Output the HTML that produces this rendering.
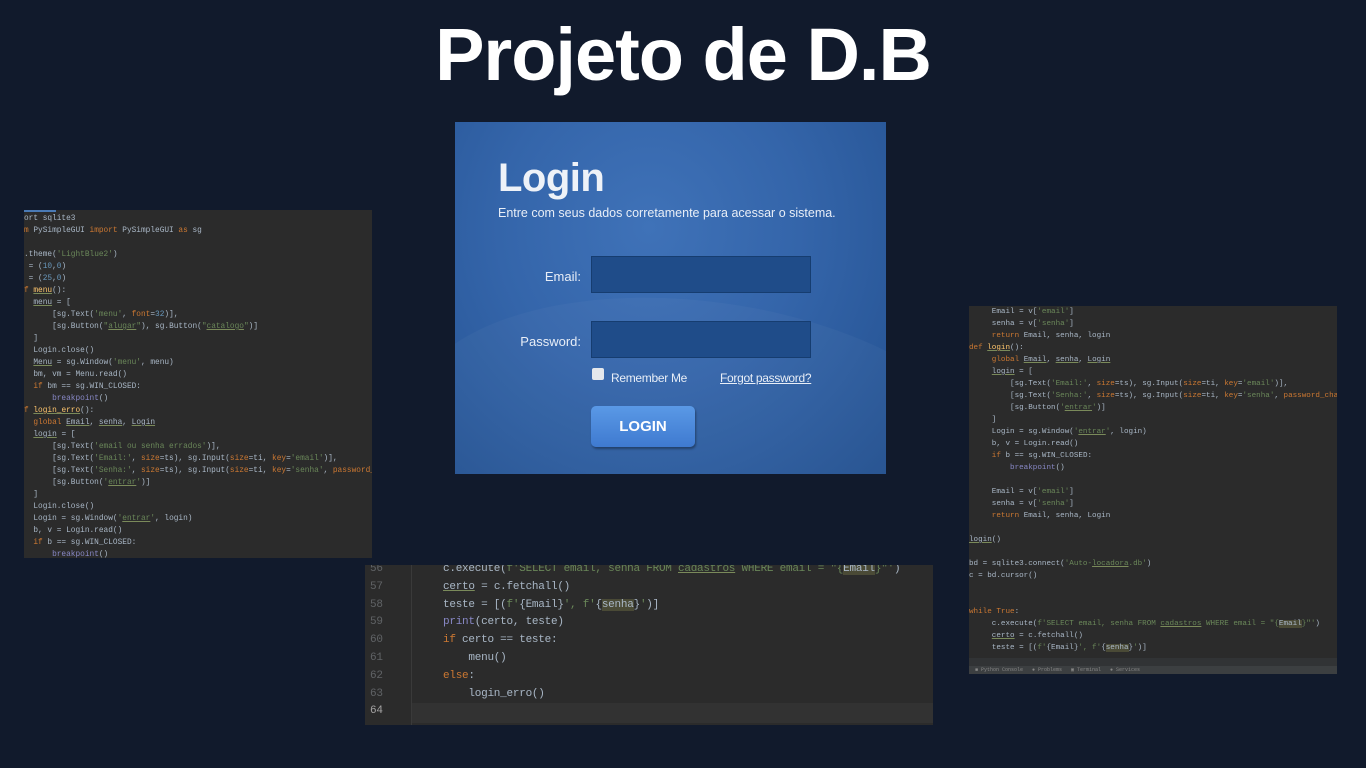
<!DOCTYPE html>
<html><head><meta charset="utf-8"><style>
*{margin:0;padding:0;box-sizing:border-box}
body{width:1366px;height:768px;background:#111a2c;position:relative;overflow:hidden;font-family:"Liberation Sans",sans-serif}
.title{position:absolute;left:0;width:1366px;top:10px;text-align:center;color:#fff;font-weight:bold;font-size:74px;line-height:90px;letter-spacing:-1px}
.code{position:absolute;background:#2b2b2b;font-family:"Liberation Mono",monospace;color:#a9b7c6;white-space:pre;overflow:hidden}
.code div{position:absolute;left:0}
.k{color:#cc7832}.s{color:#6a8759}.n{color:#6897bb}.p{color:#8888c6}.u{text-decoration:underline;text-decoration-color:#7a8a5a}.h{background:#4a4a36}
.login{position:absolute;left:455px;top:122px;width:431px;height:352px;background:radial-gradient(ellipse at 45% 30%,#3f72b8 0%,#3465aa 45%,#23508f 100%);color:#fff;overflow:hidden}
.login .wave{position:absolute;left:-50px;top:180px;width:600px;height:300px;border-radius:50%;background:rgba(255,255,255,0.03);transform:rotate(8deg)}
.inp{position:absolute;left:136px;width:220px;height:37px;background:#1f4c89;border:1px solid #163d70}
</style></head><body>
<div class="title">Projeto de D.B</div>

<div class="code" style="left:24px;top:210px;width:348px;height:348px;font-size:7.8px;line-height:11.9px">
<div style="top:0;left:0;width:32px;height:2px;background:#4a7ab5"></div>
<div style="top:4px">ort sqlite3</div>
<div style="top:16px"><span class="k">m</span> PySimpleGUI <span class="k">import</span> PySimpleGUI <span class="k">as</span> sg</div>
<div style="top:40px">.theme(<span class="s">'LightBlue2'</span>)</div>
<div style="top:52px"> = (<span class="n">10</span>,<span class="n">0</span>)</div>
<div style="top:64px"> = (<span class="n">25</span>,<span class="n">0</span>)</div>
<div style="top:76px"><span class="k">f</span> <span class="u" style="color:#ffc66d">menu</span>():</div>
<div style="top:88px">  <span class="u">menu</span> = [</div>
<div style="top:100px">      [sg.Text(<span class="s">'menu'</span>, <span class="k">font</span>=<span class="n">32</span>)],</div>
<div style="top:112px">      [sg.Button(<span class="s">"<span class="u">alugar</span>"</span>), sg.Button(<span class="s">"<span class="u">catalogo</span>"</span>)]</div>
<div style="top:124px">  ]</div>
<div style="top:136px">  Login.close()</div>
<div style="top:148px">  <span class="u">Menu</span> = sg.Window(<span class="s">'menu'</span>, menu)</div>
<div style="top:160px">  bm, vm = Menu.read()</div>
<div style="top:172px">  <span class="k">if</span> bm == sg.WIN_CLOSED:</div>
<div style="top:184px">      <span class="p">breakpoint</span>()</div>
<div style="top:196px"><span class="k">f</span> <span class="u" style="color:#ffc66d">login_erro</span>():</div>
<div style="top:208px">  <span class="k">global</span> <span class="u">Email</span>, <span class="u">senha</span>, <span class="u">Login</span></div>
<div style="top:220px">  <span class="u">login</span> = [</div>
<div style="top:232px">      [sg.Text(<span class="s">'email ou senha errados'</span>)],</div>
<div style="top:244px">      [sg.Text(<span class="s">'Email:'</span>, <span class="k">size</span>=ts), sg.Input(<span class="k">size</span>=ti, <span class="k">key</span>=<span class="s">'email'</span>)],</div>
<div style="top:256px">      [sg.Text(<span class="s">'Senha:'</span>, <span class="k">size</span>=ts), sg.Input(<span class="k">size</span>=ti, <span class="k">key</span>=<span class="s">'senha'</span>, <span class="k">password_char</span>=<span class="s">'*</span></div>
<div style="top:268px">      [sg.Button(<span class="s">'<span class="u">entrar</span>'</span>)]</div>
<div style="top:280px">  ]</div>
<div style="top:292px">  Login.close()</div>
<div style="top:304px">  Login = sg.Window(<span class="s">'<span class="u">entrar</span>'</span>, login)</div>
<div style="top:316px">  b, v = Login.read()</div>
<div style="top:328px">  <span class="k">if</span> b == sg.WIN_CLOSED:</div>
<div style="top:340px">      <span class="p">breakpoint</span>()</div>
</div>

<div class="login">
<div class="wave"></div>
<div style="position:absolute;left:43px;top:34px;font-size:40px;font-weight:bold;color:#eef2f8;letter-spacing:-0.5px">Login</div>
<div style="position:absolute;left:43px;top:84px;font-size:12.5px;color:#e8eef7">Entre com seus dados corretamente para acessar o sistema.</div>
<div style="position:absolute;right:305px;top:147px;font-size:13px;color:#e8eef7">Email:</div>
<div class="inp" style="top:134px"></div>
<div style="position:absolute;right:305px;top:212px;font-size:13px;color:#e8eef7">Password:</div>
<div class="inp" style="top:199px"></div>
<div style="position:absolute;left:137px;top:246px;width:12px;height:12px;background:#e5e8ec;border-radius:2px"></div>
<div style="position:absolute;left:156px;top:249px;font-size:12px;color:#e8eef7;letter-spacing:-0.3px">Remember Me</div>
<div style="position:absolute;left:265px;top:249px;font-size:12px;color:#e8eef7;text-decoration:underline;letter-spacing:-0.3px">Forgot password?</div>
<div style="position:absolute;left:136px;top:284px;width:104px;height:41px;border-radius:5px;background:linear-gradient(#5a99e6,#3f7ad0);box-shadow:1px 2px 2px rgba(0,0,0,.35);color:#fff;font-weight:bold;font-size:15px;text-align:center;line-height:41px">LOGIN</div>
</div>

<div class="code" style="left:969px;top:306px;width:368px;height:368px;font-size:7.6px;line-height:11.9px">
<div style="top:1px">     Email = v[<span class="s">'email'</span>]</div>
<div style="top:13px">     senha = v[<span class="s">'senha'</span>]</div>
<div style="top:25px">     <span class="k">return</span> Email, senha, login</div>
<div style="top:37px"><span class="k">def</span> <span class="u" style="color:#ffc66d">login</span>():</div>
<div style="top:49px">     <span class="k">global</span> <span class="u">Email</span>, <span class="u">senha</span>, <span class="u">Login</span></div>
<div style="top:61px">     <span class="u">login</span> = [</div>
<div style="top:73px">         [sg.Text(<span class="s">'Email:'</span>, <span class="k">size</span>=ts), sg.Input(<span class="k">size</span>=ti, <span class="k">key</span>=<span class="s">'email'</span>)],</div>
<div style="top:85px">         [sg.Text(<span class="s">'Senha:'</span>, <span class="k">size</span>=ts), sg.Input(<span class="k">size</span>=ti, <span class="k">key</span>=<span class="s">'senha'</span>, <span class="k">password_char</span>=<span class="s">'*</span></div>
<div style="top:97px">         [sg.Button(<span class="s">'<span class="u">entrar</span>'</span>)]</div>
<div style="top:109px">     ]</div>
<div style="top:121px">     Login = sg.Window(<span class="s">'<span class="u">entrar</span>'</span>, login)</div>
<div style="top:133px">     b, v = Login.read()</div>
<div style="top:145px">     <span class="k">if</span> b == sg.WIN_CLOSED:</div>
<div style="top:157px">         <span class="p">breakpoint</span>()</div>
<div style="top:181px">     Email = v[<span class="s">'email'</span>]</div>
<div style="top:193px">     senha = v[<span class="s">'senha'</span>]</div>
<div style="top:205px">     <span class="k">return</span> Email, senha, Login</div>
<div style="top:229px"><span class="u">login</span>()</div>
<div style="top:253px">bd = sqlite3.connect(<span class="s">'Auto-<span class="u">locadora</span>.db'</span>)</div>
<div style="top:265px">c = bd.cursor()</div>
<div style="top:301px"><span class="k">while True</span>:</div>
<div style="top:313px">     c.execute(<span class="s">f'SELECT email, senha FROM <span class="u">cadastros</span> WHERE email = "{<span class="h" style="color:#a9b7c6">Email</span>}"'</span>)</div>
<div style="top:325px">     <span class="u">certo</span> = c.fetchall()</div>
<div style="top:337px">     teste = [(<span class="s">f'</span>{Email}<span class="s">', f'</span>{<span class="h">senha</span>}<span class="s">'</span>)]</div>
<div style="top:352px;left:0;width:368px;height:8px;background:#313335"></div>
<div style="top:360px;left:0;width:368px;height:8px;background:#3c3f41;font-size:5px;color:#888;line-height:8px">  ■ Python Console   ● Problems   ▣ Terminal   ● Services</div>
</div>

<div class="code" style="left:365px;top:565px;width:568px;height:160px;font-size:11px;line-height:17.8px;letter-spacing:-0.25px">
<div style="left:46px;top:0;width:1px;height:160px;background:#3a3a3a"></div>
<div style="left:47px;top:138px;width:521px;height:20px;background:#323232"></div>
<div style="top:-4px;left:5px;color:#606366">56<br>57<br>58<br>59<br>60<br>61<br>62<br>63<br><span style="color:#a4a3a3">64</span></div>
<div style="top:-4px;left:78px">c.execute(<span class="s">f'SELECT email, senha FROM <span class="u">cadastros</span> WHERE email = "{<span class="h" style="color:#a9b7c6">Email</span>}"'</span>)</div>
<div style="top:13.8px;left:78px"><span class="u">certo</span> = c.fetchall()</div>
<div style="top:31.6px;left:78px">teste = [(<span class="s">f'</span>{Email}<span class="s">', f'</span>{<span class="h">senha</span>}<span class="s">'</span>)]</div>
<div style="top:49.4px;left:78px"><span class="p">print</span>(certo, teste)</div>
<div style="top:67.2px;left:78px"><span class="k">if</span> certo == teste:</div>
<div style="top:85px;left:78px">    menu()</div>
<div style="top:102.8px;left:78px"><span class="k">else</span>:</div>
<div style="top:120.6px;left:78px">    login_erro()</div>
</div>
</body></html>
